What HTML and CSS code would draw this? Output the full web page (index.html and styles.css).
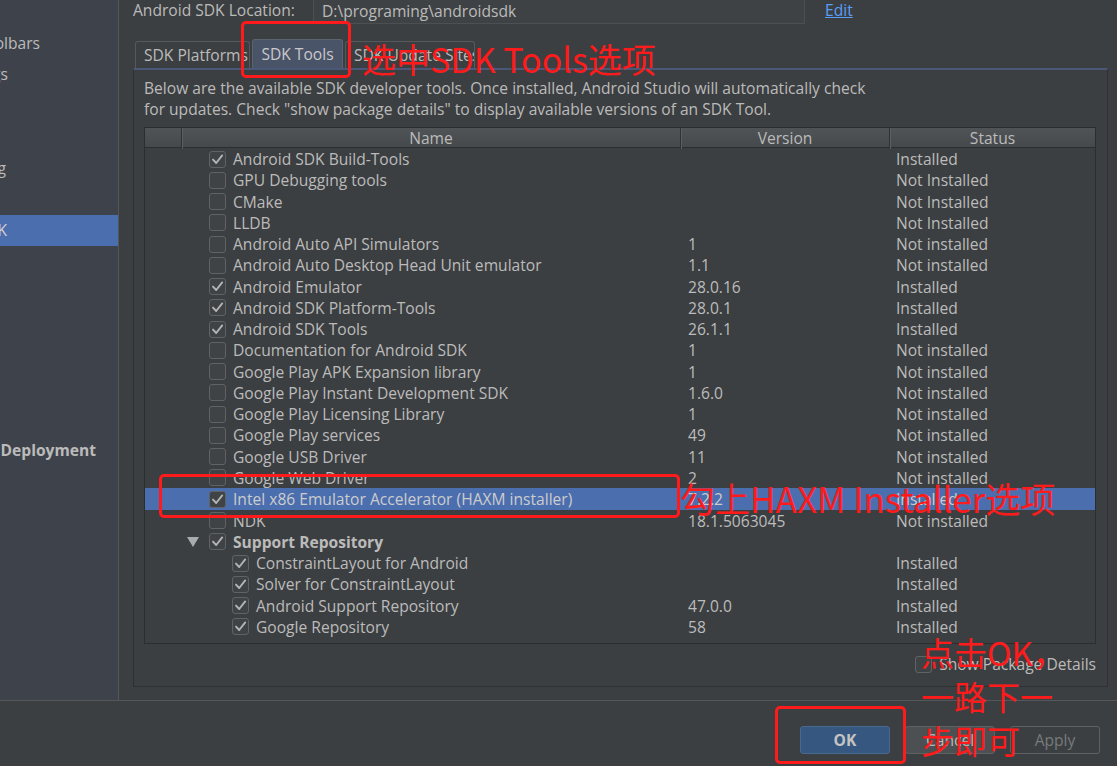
FILE: index.html
```html
<!DOCTYPE html>
<html>
<head>
<meta charset="utf-8">
<link rel="stylesheet" href="styles.css">
</head>
<body>
<div class="app">
  <div class="top">
    <aside class="sidebar">
      <div class="nav-item"><span class="nav-label w40">Menus and Toolbars</span></div>
      <div class="nav-item"><span class="nav-label w8">System Settings</span></div>
      <div class="nav-item"></div>
      <div class="nav-item"></div>
      <div class="nav-item"><span class="nav-label w6">Data Sharing</span></div>
      <div class="nav-item"></div>
      <div class="nav-item sel"><span class="nav-label w7">Android SDK</span></div>
      <div class="nav-item"></div>
      <div class="nav-item"></div>
      <div class="nav-item"></div>
      <div class="nav-item"></div>
      <div class="nav-item"></div>
      <div class="nav-item"></div>
      <div class="nav-item"><span class="nav-label w95 bold">Build, Execution, Deployment</span></div>
    </aside>
    <main class="content">
      <div class="loc-row">
        <span class="loc-label">Android SDK Location:</span>
        <span class="loc-field">D:\programing\androidsdk</span>
        <a class="edit">Edit</a>
      </div>
      <div class="tabs">
        <div class="tab t-plat">SDK Platforms</div>
        <div class="tab t-tools active">SDK Tools</div>
        <div class="tab t-sites">SDK Update Sites</div>
      </div>
      <div class="panel">
        <p class="desc">Below are the available SDK developer tools. Once installed, Android Studio will automatically check<br>for updates. Check "show package details" to display available versions of an SDK Tool.</p>
        <div class="table">
          <div class="thead">
            <div class="th"></div>
            <div class="th">Name</div>
            <div class="th">Version</div>
            <div class="th">Status</div>
          </div>
          <div class="row"><div class="name l1"><span class="cb on"></span>Android SDK Build-Tools</div><div class="ver"></div><div class="st">Installed</div></div>
          <div class="row"><div class="name l1"><span class="cb"></span>GPU Debugging tools</div><div class="ver"></div><div class="st">Not Installed</div></div>
          <div class="row"><div class="name l1"><span class="cb"></span>CMake</div><div class="ver"></div><div class="st">Not Installed</div></div>
          <div class="row"><div class="name l1"><span class="cb"></span>LLDB</div><div class="ver"></div><div class="st">Not Installed</div></div>
          <div class="row"><div class="name l1"><span class="cb"></span>Android Auto API Simulators</div><div class="ver">1</div><div class="st">Not installed</div></div>
          <div class="row"><div class="name l1"><span class="cb"></span>Android Auto Desktop Head Unit emulator</div><div class="ver">1.1</div><div class="st">Not installed</div></div>
          <div class="row"><div class="name l1"><span class="cb on"></span>Android Emulator</div><div class="ver">28.0.16</div><div class="st">Installed</div></div>
          <div class="row"><div class="name l1"><span class="cb on"></span>Android SDK Platform-Tools</div><div class="ver">28.0.1</div><div class="st">Installed</div></div>
          <div class="row"><div class="name l1"><span class="cb on"></span>Android SDK Tools</div><div class="ver">26.1.1</div><div class="st">Installed</div></div>
          <div class="row"><div class="name l1"><span class="cb"></span>Documentation for Android SDK</div><div class="ver">1</div><div class="st">Not installed</div></div>
          <div class="row"><div class="name l1"><span class="cb"></span>Google Play APK Expansion library</div><div class="ver">1</div><div class="st">Not installed</div></div>
          <div class="row"><div class="name l1"><span class="cb"></span>Google Play Instant Development SDK</div><div class="ver">1.6.0</div><div class="st">Not installed</div></div>
          <div class="row"><div class="name l1"><span class="cb"></span>Google Play Licensing Library</div><div class="ver">1</div><div class="st">Not installed</div></div>
          <div class="row"><div class="name l1"><span class="cb"></span>Google Play services</div><div class="ver">49</div><div class="st">Not installed</div></div>
          <div class="row"><div class="name l1"><span class="cb"></span>Google USB Driver</div><div class="ver">11</div><div class="st">Not installed</div></div>
          <div class="row"><div class="name l1"><span class="cb"></span>Google Web Driver</div><div class="ver">2</div><div class="st">Not installed</div></div>
          <div class="row selected"><div class="name l1"><span class="cb on"></span>Intel x86 Emulator Accelerator (HAXM installer)</div><div class="ver">7.2.2</div><div class="st">Installed</div></div>
          <div class="row"><div class="name l1"><span class="cb"></span>NDK</div><div class="ver">18.1.5063045</div><div class="st">Not installed</div></div>
          <div class="row"><div class="name l0"><svg class="tri" width="12" height="10" viewBox="0 0 12 10"><polygon points="0,0 12,0 6,10" fill="#a9abad"/></svg><span class="cb on"></span><b>Support Repository</b></div><div class="ver"></div><div class="st"></div></div>
          <div class="row"><div class="name l2"><span class="cb on"></span>ConstraintLayout for Android</div><div class="ver"></div><div class="st">Installed</div></div>
          <div class="row"><div class="name l2"><span class="cb on"></span>Solver for ConstraintLayout</div><div class="ver"></div><div class="st">Installed</div></div>
          <div class="row"><div class="name l2"><span class="cb on"></span>Android Support Repository</div><div class="ver">47.0.0</div><div class="st">Installed</div></div>
          <div class="row"><div class="name l2"><span class="cb on"></span>Google Repository</div><div class="ver">58</div><div class="st">Installed</div></div>
        </div>
        <div class="pkg-row"><span class="cb"></span>Show Package Details</div>
      </div>
    </main>
  </div>
  <div class="bottom">
    <button class="btn ok">OK</button>
    <button class="btn cancel">Cancel</button>
    <button class="btn apply">Apply</button>
  </div>
</div>

<div class="rbox box1"></div>
<div class="note note1">选中SDK Tools选项</div>
<div class="rbox box2"></div>
<div class="note note2">勾上HAXM Installer选项</div>
<div class="rbox box3"></div>
<div class="note note3">点击OK，<br>一路下一<br>步即可</div>
</body>
</html>
```
FILE: styles.css
```css
* { box-sizing: border-box; }
html, body { margin: 0; padding: 0; }
body {
  width: 1117px;
  height: 766px;
  overflow: hidden;
  position: relative;
  background: #3c3f41;
  color: #bbbbbb;
  font-family: "Open Sans", "Noto Sans", sans-serif;
  font-size: 15.6px;
}
.app { display: flex; flex-direction: column; height: 766px; }
.top { display: flex; height: 701px; border-bottom: 1px solid #555759; flex: none; }

/* sidebar */
.sidebar {
  width: 119px;
  flex: none;
  background: #3e434b;
  border-right: 1px solid #54575a;
  overflow: hidden;
  padding-top: 27px;
}
.nav-item { height: 31.3px; display: flex; align-items: center; }
.nav-item.sel { background: #4b6eaf; color: #d0d0d0; }
.nav-label { display: flex; justify-content: flex-end; white-space: nowrap; flex: none; }
.nav-label.w40 { width: 40px; }
.nav-label.w8 { width: 8px; }
.nav-label.w6 { width: 6px; }
.nav-label.w7 { width: 7px; }
.nav-label.w95 { width: 96px; }
.bold { font-weight: 700; }

/* content */
.content { flex: 1; padding: 0 9px 0 14px; display: flex; flex-direction: column; }
.loc-row { display: flex; align-items: center; height: 25px; margin-top: -3px; }
.loc-label { width: 180px; flex: none; }
.loc-field {
  width: 492px;
  height: 28px;
  display: flex;
  align-items: center;
  padding: 3px 0 0 8px;
  background: #3f4244;
  border: 1px solid #4d5052;
  border-top: none;
}
.edit { margin-left: 20px; color: #589df6; text-decoration: underline; }

.tabs { display: flex; align-items: flex-end; height: 30px; margin-top: 16px; padding-left: 2px; }
.tab {
  height: 27px;
  border: 1px solid #56595b;
  border-bottom: none;
  border-radius: 3px 3px 0 0;
  padding: 0 0 0 8px;
  margin-right: 2px;
  display: flex;
  align-items: center;
  white-space: nowrap;
  overflow: hidden;
}
.t-plat { width: 115px; }
.t-tools { width: 91px; justify-content: center; padding: 0; }
.t-sites { width: 130px; }
.tab.active { height: 29px; background: #4a5469; color: #c9c9c9; border-color: #5c6370; }

.panel {
  height: 619px;
  border: 1px solid #2e3032;
  border-top: 2px solid #4b5776;
  padding: 8px 11px 0 10px;
  display: flex;
  flex-direction: column;
}
.desc { margin: 0; line-height: 21px; }

.table {
  margin-top: 7px;
  width: 952px;
  height: 517px;
  border: 1px solid #2b2d2e;
  flex: none;
}
.thead {
  display: grid;
  grid-template-columns: 37px 499px 209px 205px;
  height: 20px;
  background: linear-gradient(#515457, #46494b);
  border-bottom: 1px solid #2b2d2e;
}
.th {
  text-align: center;
  line-height: 21px;
  border-right: 1px solid #2f3133;
  box-shadow: inset 1px 0 0 #5c5f61;
}
.th:first-child { box-shadow: none; }
.th:last-child { border-right: none; }

.row {
  display: grid;
  grid-template-columns: 536px 209px 205px;
  height: 21.27px;
  align-items: center;
  white-space: nowrap;
}
.row.selected { background: #4b6eaf; color: #cccccc; }
.name { display: flex; align-items: center; }
.name.l1 { padding-left: 64px; }
.name.l0 { padding-left: 42px; }
.name.l2 { padding-left: 87px; }
.name b { font-weight: 700; }
.tri { margin-right: 10px; flex: none; }
.ver { padding-left: 7px; }
.st { padding-left: 6px; }

.cb {
  width: 17px;
  height: 17px;
  flex: none;
  border: 1px solid #606365;
  border-radius: 3px;
  background: #404345;
  margin-right: 7px;
  display: inline-block;
}
.cb.on {
  background: #404345 url("data:image/svg+xml;utf8,<svg xmlns='http://www.w3.org/2000/svg' width='15' height='15' viewBox='0 0 15 15'><path d='M3 7.6 L6.2 11 L12.2 3.4' fill='none' stroke='%23b4b4b4' stroke-width='1.9' stroke-linecap='round' stroke-linejoin='round'/></svg>") center / 15px 15px no-repeat;
}
.row.selected .cb { border-color: #5d6366; background-color: #404345; }

.pkg-row {
  display: flex;
  justify-content: flex-end;
  align-items: center;
  margin-top: 11px;
  height: 18px;
}

/* bottom bar */
.bottom {
  flex: 1;
  display: flex;
  justify-content: flex-end;
  align-items: flex-start;
  gap: 15px;
  padding: 25px 17px 0 0;
}
.btn {
  width: 90px;
  height: 28px;
  border-radius: 3px;
  font-family: "Open Sans", "Noto Sans", sans-serif;
  font-size: 15.6px;
  color: #bbbbbb;
  border: 1px solid #5e6162;
  background: #4c5052;
}
.btn.ok { background: #365880; border-color: #46698f; font-weight: 700; color: #c4c4c4; }
.btn.apply { background: #3c3f41; color: #777a7c; }

/* annotations */
.rbox { position: absolute; border: 3px solid #ff1b1b; border-radius: 5px; }
.box1 { left: 241px; top: 21px; width: 110px; height: 57px; }
.box2 { left: 159px; top: 474px; width: 521px; height: 44px; }
.box3 { left: 775px; top: 706px; width: 131px; height: 58px; }
.note {
  position: absolute;
  color: #ff1b1b;
  font-family: "Noto Sans CJK SC", "Noto Sans", sans-serif;
  white-space: nowrap;
}
.note1 { left: 362px; top: 40px; font-size: 34px; line-height: 38px; }
.note2 { left: 680px; top: 479px; font-size: 35px; line-height: 38px; }
.note3 { left: 921px; top: 630px; font-size: 33px; line-height: 44px; }
```
